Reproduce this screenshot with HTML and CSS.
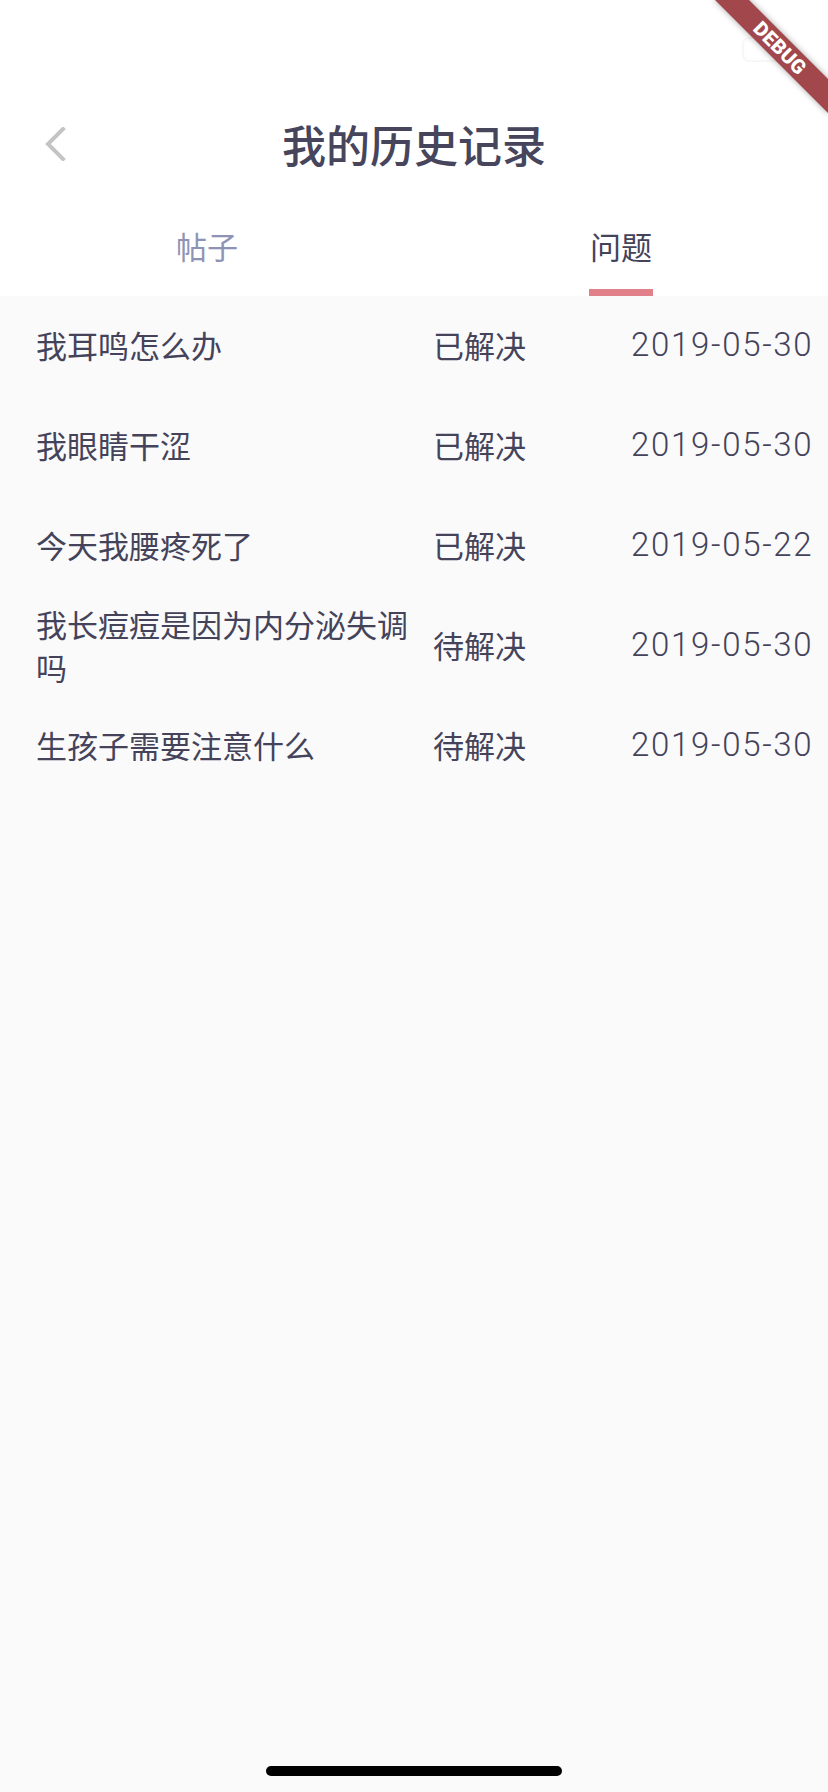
FILE: index.html
```html
<!DOCTYPE html>
<html lang="zh-CN">
<head>
<meta charset="utf-8">
<title>我的历史记录</title>
<link rel="stylesheet" href="styles.css">
</head>
<body>
<div class="screen">
  <div class="statusbar">
    <div class="battery"><div class="battery-fill"></div></div>
  </div>
  <header class="appbar">
    <div class="back">
      <svg width="22" height="34" viewBox="0 0 22 34" aria-hidden="true">
        <polyline points="18,2 3,17 18,32" fill="none" stroke="#c4c4c4" stroke-width="4" stroke-linecap="square"/>
      </svg>
    </div>
    <h1 class="title">我的历史记录</h1>
    <div class="spacer"></div>
  </header>
  <nav class="tabs">
    <div class="tab">
      <span class="tab-label">帖子</span>
      <span class="tab-indicator"></span>
    </div>
    <div class="tab tab-active">
      <span class="tab-label">问题</span>
      <span class="tab-indicator"></span>
    </div>
  </nav>
  <main class="list">
    <div class="row">
      <div class="q">我耳鸣怎么办</div>
      <div class="status">已解决</div>
      <div class="date">2019-05-30</div>
    </div>
    <div class="row">
      <div class="q">我眼睛干涩</div>
      <div class="status">已解决</div>
      <div class="date">2019-05-30</div>
    </div>
    <div class="row">
      <div class="q">今天我腰疼死了</div>
      <div class="status">已解决</div>
      <div class="date">2019-05-22</div>
    </div>
    <div class="row">
      <div class="q">我长痘痘是因为内分泌失调吗</div>
      <div class="status">待解决</div>
      <div class="date">2019-05-30</div>
    </div>
    <div class="row">
      <div class="q">生孩子需要注意什么</div>
      <div class="status">待解决</div>
      <div class="date">2019-05-30</div>
    </div>
  </main>
  <div class="home-indicator"></div>
  <div class="debug-banner">DEBUG</div>
</div>
</body>
</html>
```

FILE: styles.css
```css
* { box-sizing: border-box; }

html, body {
  margin: 0;
  padding: 0;
  background: #fafafa;
}

body {
  font-family: "Noto Sans CJK SC", "Noto Sans", sans-serif;
  color: #44435a;
}

.screen {
  position: relative;
  width: 828px;
  height: 1792px;
  overflow: hidden;
  display: flex;
  flex-direction: column;
  background: #fafafa;
}

.statusbar {
  height: 88px;
  background: #ffffff;
  display: flex;
  justify-content: flex-end;
  align-items: flex-start;
  padding: 37px 39px 0 0;
}

.battery {
  width: 47px;
  height: 25px;
  border: 2px solid #f7f7f7;
  border-radius: 7px;
  padding: 2px;
}

.battery-fill {
  width: 18px;
  height: 17px;
  background: #ffffff;
  border-radius: 3px;
  box-shadow: 0 0 2px rgba(0,0,0,0.06);
}

.appbar {
  height: 112px;
  background: #ffffff;
  display: grid;
  grid-template-columns: 1fr auto 1fr;
  align-items: center;
}

.back {
  padding-left: 45px;
  display: flex;
  align-items: center;
}

.back svg { display: block; }

.title {
  margin: 0;
  font-size: 44px;
  font-weight: 500;
  line-height: 60px;
  color: #46455b;
  letter-spacing: 0;
}

.tabs {
  height: 96px;
  background: #ffffff;
  display: flex;
}

.tab {
  flex: 1;
  display: flex;
  flex-direction: column;
  align-items: center;
  justify-content: flex-end;
}

.tab-label {
  font-size: 31px;
  line-height: 44px;
  color: #8e93b6;
}

.tab-indicator {
  display: block;
  width: 64px;
  height: 7px;
  margin-top: 21px;
  background: transparent;
}

.tab-active .tab-label { color: #44435a; }
.tab-active .tab-indicator { background: #e2808a; }

.list {
  flex: 1;
  background: #fafafa;
  display: flex;
  flex-direction: column;
}

.row {
  height: 100px;
  display: grid;
  grid-template-columns: 397px 198px auto;
  align-items: center;
  padding-left: 36px;
  padding-bottom: 3px;
}

.q {
  font-size: 31px;
  line-height: 43px;
  padding-right: 17px;
  color: #44435a;
}

.status {
  font-size: 31px;
  line-height: 43px;
  color: #44435a;
}

.date {
  font-family: Roboto, "Liberation Sans", sans-serif;
  font-weight: 300;
  font-size: 33px;
  line-height: 43px;
  letter-spacing: 1.7px;
  color: #44435a;
}

.home-indicator {
  position: absolute;
  left: 266px;
  top: 1766px;
  width: 296px;
  height: 10px;
  border-radius: 5px;
  background: #000000;
}

.debug-banner {
  position: absolute;
  left: 700px;
  top: 36px;
  width: 160px;
  height: 24px;
  transform: rotate(45deg);
  background: #a2474b;
  color: #ffffff;
  font-family: Roboto, "DejaVu Sans", sans-serif;
  font-weight: 900;
  font-size: 20px;
  line-height: 24px;
  text-align: center;
  letter-spacing: 0.3px;
  box-shadow: 0 0 6px rgba(0,0,0,0.35);
}
```
